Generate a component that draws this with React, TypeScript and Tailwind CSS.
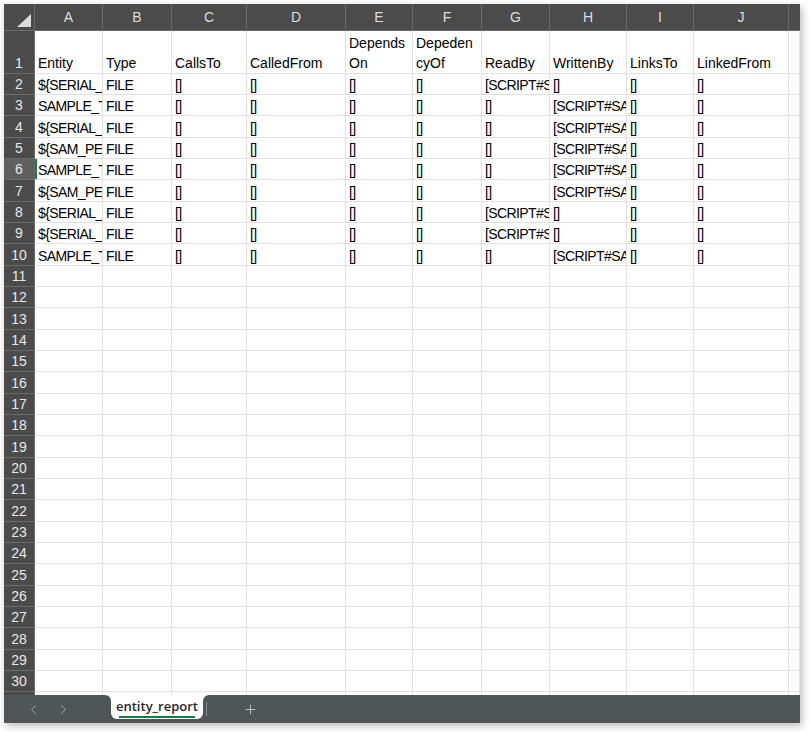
import React from 'react';
import { ChevronLeft, ChevronRight, Plus } from 'lucide-react';

const letters = ['A', 'B', 'C', 'D', 'E', 'F', 'G', 'H', 'I', 'J'];

const headers: React.ReactNode[] = [
  'Entity',
  'Type',
  'CallsTo',
  'CalledFrom',
  <>Depends<br />On</>,
  <>Depeden<br />cyOf</>,
  'ReadBy',
  'WrittenBy',
  'LinksTo',
  'LinkedFrom',
];

const readRow = (entity: string) => [entity, 'FILE', '[]', '[]', '[]', '[]', '[SCRIPT#SAMPLE_LOAD]', '[]', '[]', '[]'];
const writeRow = (entity: string) => [entity, 'FILE', '[]', '[]', '[]', '[]', '[]', '[SCRIPT#SAMPLE_JOB]', '[]', '[]'];

const rows: string[][] = [
  readRow('${SERIAL_TMP_FILE}'),
  writeRow('SAMPLE_TEST_FILE'),
  writeRow('${SERIAL_OUT_FILE}'),
  writeRow('${SAM_PERF_FILE}'),
  writeRow('SAMPLE_TRAN_FILE'),
  writeRow('${SAM_PERF_OUT}'),
  readRow('${SERIAL_IN_FILE}'),
  readRow('${SERIAL_REF_FILE}'),
  writeRow('SAMPLE_TMP_OUT'),
];

const gridCols = 'grid grid-cols-[31px_68px_69px_75px_99px_67px_69px_68px_77px_67px_95px_1fr]';
const cellCls = 'border-r border-b border-[#e1e1e1] overflow-hidden whitespace-nowrap pl-[3px] flex items-end text-black';
const rowHdrCls = 'bg-[#4b4b4b] border-r border-b border-[#6a6a6a] flex items-end justify-center leading-[19px] text-[#e8e8e8]';

export default function App() {
  const totalRows = 31;

  return (
    <div className="w-[810px] h-[734px] bg-white font-['Liberation_Sans',Arial,sans-serif] text-[14px]">
      <div className="ml-[4px] mt-[4px] w-[796px] h-[719px] flex flex-col bg-white shadow-[2px_3px_8px_rgba(0,0,0,0.28)]">
        {/* grid */}
        <div className="h-[691px] overflow-hidden">
          {/* column header */}
          <div className={`${gridCols} h-[27px] bg-[#4b4b4b]`}>
            <div className="border-r border-b border-[#6a6a6a] relative">
              <svg className="absolute right-[3px] bottom-[3px]" width="14" height="13" viewBox="0 0 14 13">
                <polygon points="14,0 14,13 0,13" fill="#dcdcdc" />
              </svg>
            </div>
            {letters.map((l) => (
              <div key={l} className="border-r border-b border-[#6a6a6a] flex items-center justify-center text-[#dedede]">
                {l}
              </div>
            ))}
            <div className="border-b border-[#6a6a6a]" />
          </div>

          {/* row 1 */}
          <div className={`${gridCols} h-[43px]`}>
            <div className={rowHdrCls}>1</div>
            {headers.map((h, i) => (
              <div key={i} className={`${cellCls} leading-[20px]`}>
                <span>{h}</span>
              </div>
            ))}
            <div className={cellCls} />
          </div>

          {/* rows 2.. */}
          {Array.from({ length: totalRows - 1 }).map((_, i) => {
            const n = i + 2;
            const data = rows[i];
            const active = n === 6;
            return (
              <div key={n} className={`${gridCols} ${i % 3 === 2 ? 'h-[22px]' : 'h-[21px]'}`}>
                <div className={`${rowHdrCls} ${active ? 'bg-[#5f5f5f]' : ''}`}>{n}</div>
                {letters.map((l, c) => (
                  <div
                    key={l}
                    className={`${cellCls} leading-[18px] tracking-[-0.6px] ${active && c === 0 ? 'shadow-[inset_2px_0_0_#1e7b45]' : ''}`}
                  >
                    {data ? data[c] : ''}
                  </div>
                ))}
                <div className={cellCls} />
              </div>
            );
          })}
        </div>

        {/* sheet tabs */}
        <div className="h-[28px] flex bg-white">
          <div className="w-[107px] bg-[#505557] rounded-tr-[6px] flex items-center text-[#a3a8aa]">
            <ChevronLeft size={15} strokeWidth={1.5} className="ml-[22px]" />
            <ChevronRight size={15} strokeWidth={1.5} className="ml-[15px]" />
          </div>
          <div className="w-[92px] bg-[#505557]">
            <div className="h-[24px] bg-white rounded-b-[6px] flex justify-center">
              <div className="flex flex-col items-center">
                <span className="font-['Open_Sans',sans-serif] text-[13px] font-semibold text-[#262626] leading-[20px] mt-[1px]">
                  entity_report
                </span>
                <div className="h-[2px] w-[76px] bg-[#137e43]" />
              </div>
            </div>
          </div>
          <div className="flex-1 bg-[#505557] rounded-tl-[6px] flex items-center">
            <div className="ml-[3px] w-[1px] h-[14px] bg-[#868b8d]" />
            <Plus size={15} strokeWidth={1.3} className="ml-[36px] text-[#d0d3d4]" />
          </div>
        </div>
      </div>
    </div>
  );
}
